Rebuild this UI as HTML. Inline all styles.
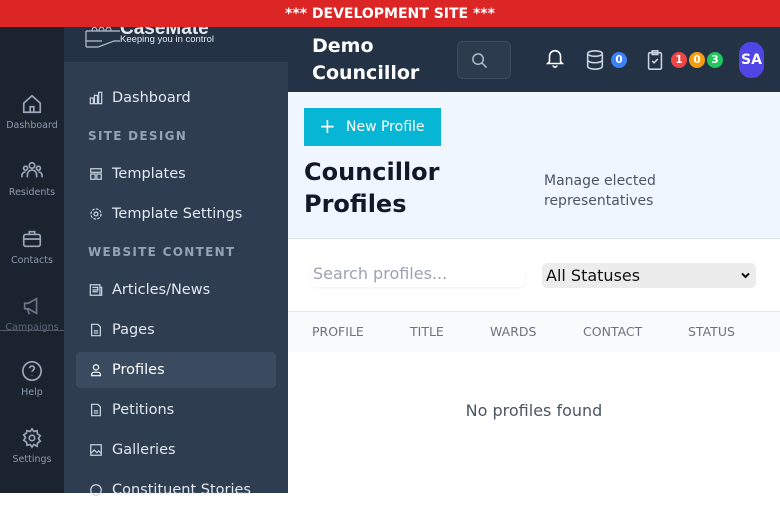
<!DOCTYPE html>
<html><head><meta charset="utf-8"><style>
*{box-sizing:border-box;margin:0;padding:0}
body{width:780px;height:493px;overflow:hidden;font-family:"DejaVu Sans","Liberation Sans",sans-serif;background:#fff;position:relative}
.banner{position:absolute;top:0;left:0;width:780px;height:27px;background:#dc2626;color:#fff;font-weight:bold;font-size:14px;text-align:center;line-height:28px;z-index:5}
.rail{position:absolute;top:27px;left:0;width:64px;height:466px;background:#1b232e}
.ri{position:absolute;left:0;width:64px;text-align:center;color:#8b9bb0;font-size:9.5px}
.ri svg{display:block;margin:0 auto 5px}
.side{position:absolute;top:27px;left:64px;width:224px;height:466px;background:#2e3d50}
.logo{position:absolute;top:0;left:0;width:224px;height:36px;background:#243246;border-bottom:1px solid #334155;overflow:hidden}
.nav{position:absolute;left:12px;width:200px;height:36px;color:#e2e8f0;font-size:14.5px;line-height:36px;padding-left:36px}
.nav svg{position:absolute;left:13px;top:11px}
.nav.act{background:#3a4b60;border-radius:4px;color:#fff}
.sec{position:absolute;left:24px;color:#94a3b8;font-size:12px;font-weight:bold;letter-spacing:1.3px}
.top{position:absolute;top:27px;left:288px;width:492px;height:65px;background:#243246}
.hero{position:absolute;top:92px;left:288px;width:492px;height:147px;background:#eff6ff;border-bottom:1px solid #dbe4ee}
.badge{position:absolute;width:16px;height:16px;border-radius:8px;color:#fff;font-size:10.5px;font-weight:bold;text-align:center;line-height:16px;top:52px}
</style></head><body>
<div class="banner">*** DEVELOPMENT SITE ***</div>
<div class="rail">
 <div class="ri" style="top:66px"><svg width="22" height="22" viewBox="0 0 24 24" fill="none" stroke="#9aa8ba" stroke-width="1.8"><path d="M3 11l9-8 9 8v10H3z"/><path d="M10 21v-6h4v6"/></svg>Dashboard</div>
 <div class="ri" style="top:133px"><svg width="22" height="22" viewBox="0 0 24 24" fill="none" stroke="#9aa8ba" stroke-width="1.8"><circle cx="12" cy="6" r="3"/><circle cx="5" cy="9" r="2.2"/><circle cx="19" cy="9" r="2.2"/><path d="M7 19v-3a5 5 0 0110 0v3M1 19v-2a4 4 0 014-4M23 19v-2a4 4 0 00-4-4"/></svg>Residents</div>
 <div class="ri" style="top:201px"><svg width="22" height="22" viewBox="0 0 24 24" fill="none" stroke="#9aa8ba" stroke-width="1.8"><rect x="3" y="7" width="18" height="13" rx="2"/><path d="M9 7V4h6v3M3 12h18"/></svg>Contacts</div>
 <div class="ri" style="top:268px;color:#5b6878"><svg width="22" height="22" viewBox="0 0 24 24" fill="none" stroke="#6b7889" stroke-width="1.8"><path d="M4 9h4l9-5v16l-9-5H4z"/><path d="M7 15l2 6"/></svg>Campaigns</div>
 <div style="position:absolute;top:303px;left:0;width:64px;height:1px;background:#556"></div>
 <div class="ri" style="top:333px"><svg width="22" height="22" viewBox="0 0 24 24" fill="none" stroke="#9aa8ba" stroke-width="1.8"><circle cx="12" cy="12" r="10"/><path d="M9.5 9a2.5 2.5 0 015 0c0 2-2.5 2-2.5 4M12 17v.5"/></svg>Help</div>
 <div class="ri" style="top:400px"><svg width="22" height="22" viewBox="0 0 24 24" fill="none" stroke="#9aa8ba" stroke-width="1.8"><circle cx="12" cy="12" r="3"/><path d="M12 2l2 3 3.5-1 .5 3.5 3 2-2 3 2 3-3 2-.5 3.5L14 19l-2 3-2-3-3.5 1L6 16.5l-3-2 2-3-2-3 3-2L6.5 4 10 5z"/></svg>Settings</div>
</div>
<div class="side">
 <div class="logo"><svg style="position:absolute;left:20px;top:-4px" width="38" height="26" viewBox="0 0 38 26" fill="none" stroke="#b8c2ce" stroke-width="1.2"><path d="M2 8h34M2 8v16M2 24h12l16-6h6M8 8c0-5 5-5 5 0M15 8c0-5 5-5 5 0M22 8c0-5 5-5 5 0M2 18h16"/></svg><div style="position:absolute;left:56px;top:-9px;color:#e5e7eb;font-size:19px;font-weight:bold;font-family:'Liberation Sans',sans-serif">CaseMate</div><div style="position:absolute;left:56px;top:7px;color:#e5e7eb;font-size:9.5px;font-family:'Liberation Sans',sans-serif">Keeping you in control</div></div>
 <div class="nav" style="top:53px"><svg width="14" height="14" viewBox="0 0 16 16" fill="none" stroke="#cbd5e1" stroke-width="1.4"><rect x="1.5" y="8" width="3.5" height="6.5"/><rect x="6.2" y="5" width="3.5" height="9.5"/><rect x="11" y="1.5" width="3.5" height="13"/></svg>Dashboard</div>
 <div class="sec" style="top:102px">SITE DESIGN</div>
 <div class="nav" style="top:129px"><svg width="14" height="14" viewBox="0 0 16 16" fill="none" stroke="#cbd5e1" stroke-width="1.4"><rect x="2" y="2" width="12" height="4"/><rect x="2" y="8" width="5" height="6"/><rect x="9" y="8" width="5" height="6"/></svg>Templates</div>
 <div class="nav" style="top:169px"><svg width="14" height="14" viewBox="0 0 16 16" fill="none" stroke="#cbd5e1" stroke-width="1.4"><circle cx="8" cy="8" r="2.2"/><circle cx="8" cy="8" r="5.8" stroke-dasharray="3 1.5"/></svg>Template Settings</div>
 <div class="sec" style="top:218px">WEBSITE CONTENT</div>
 <div class="nav" style="top:245px"><svg width="14" height="14" viewBox="0 0 16 16" fill="none" stroke="#cbd5e1" stroke-width="1.4"><rect x="1.5" y="2" width="11" height="12"/><path d="M12.5 5h2v9h-2M4 5h6v3H4M4 10h6"/></svg>Articles/News</div>
 <div class="nav" style="top:285px"><svg width="14" height="14" viewBox="0 0 16 16" fill="none" stroke="#cbd5e1" stroke-width="1.4"><path d="M3 1.5h7l3 3v10H3z M5.5 9h5M5.5 11.5h5"/></svg>Pages</div>
 <div class="nav act" style="top:325px"><svg width="14" height="14" viewBox="0 0 16 16" fill="none" stroke="#fff" stroke-width="1.4"><circle cx="8" cy="5" r="3"/><path d="M3 14.5v-1a3 3 0 013-3h4a3 3 0 013 3v1z"/></svg>Profiles</div>
 <div class="nav" style="top:365px"><svg width="14" height="14" viewBox="0 0 16 16" fill="none" stroke="#cbd5e1" stroke-width="1.4"><path d="M3 1.5h7l3 3v10H3z M5.5 9h5M5.5 11.5h5"/></svg>Petitions</div>
 <div class="nav" style="top:405px"><svg width="14" height="14" viewBox="0 0 16 16" fill="none" stroke="#cbd5e1" stroke-width="1.4"><rect x="2" y="2" width="12" height="12"/><path d="M2 12l4-4 3 3 2-2 3 3"/></svg>Galleries</div>
 <div class="nav" style="top:445px"><svg width="14" height="14" viewBox="0 0 16 16" fill="none" stroke="#cbd5e1" stroke-width="1.4"><circle cx="8" cy="8" r="6"/></svg>Constituent Stories</div>
</div>
<div class="top">
 <div style="position:absolute;left:24px;top:6px;color:#fff;font-weight:bold;font-size:19px;line-height:27px">Demo<br>Councillor</div>
 <div style="position:absolute;left:169px;top:14px;width:54px;height:38px;border:1px solid #3f4d60;border-radius:6px;background:#2d3b4e"><svg style="position:absolute;left:13px;top:10px" width="17" height="17" viewBox="0 0 18 18" fill="none" stroke="#b0bac6" stroke-width="1.6"><circle cx="7.5" cy="7.5" r="5.5"/><path d="M11.5 11.5l5 5"/></svg></div>
 <svg style="position:absolute;left:256px;top:20px" width="22" height="22" viewBox="0 0 24 24" fill="none" stroke="#fff" stroke-width="1.7"><path d="M6 16V10a6 6 0 0112 0v6l2 2H4z M10 20a2 2 0 004 0"/></svg>
 <svg style="position:absolute;left:296px;top:22px" width="22" height="22" viewBox="0 0 24 24" fill="none" stroke="#cbd5e1" stroke-width="1.7"><ellipse cx="12" cy="5" rx="8" ry="3"/><path d="M4 5v14c0 1.7 3.6 3 8 3s8-1.3 8-3V5M4 12c0 1.7 3.6 3 8 3s8-1.3 8-3"/></svg>
 <svg style="position:absolute;left:356px;top:22px" width="22" height="22" viewBox="0 0 24 24" fill="none" stroke="#cbd5e1" stroke-width="1.7"><rect x="5" y="4" width="14" height="18" rx="1.5"/><rect x="9" y="2" width="6" height="4"/><path d="M9 13l2 2 4-4"/></svg>
</div>
<div class="badge" style="left:611px;background:#3b82f6">0</div>
<div class="badge" style="left:671px;background:#ef4444">1</div>
<div class="badge" style="left:689px;background:#f59e0b">0</div>
<div class="badge" style="left:707px;background:#22c55e">3</div>
<div style="position:absolute;left:739px;top:42px;width:25px;height:36px;border-radius:12px;background:#4f46e5;color:#fff;font-weight:bold;font-size:14px;text-align:center;line-height:36px">SA</div>
<div class="hero">
 <div style="position:absolute;left:16px;top:16px;width:137px;height:38px;background:#06b6d4;color:#fff;font-size:14px;line-height:38px;padding-left:42px"><span style="position:absolute;left:15px;top:-1px;font-size:20px">+</span>New Profile</div>
 <div style="position:absolute;left:16px;top:64px;color:#111827;font-weight:bold;font-size:24px;line-height:32px">Councillor<br>Profiles</div>
 <div style="position:absolute;left:256px;top:79px;color:#4b5563;font-size:14px;line-height:20px">Manage elected<br>representatives</div>
</div>
<div style="position:absolute;left:311px;top:262px;width:214px;height:25px;border-radius:5px;box-shadow:0 1px 2px rgba(0,0,0,.06);color:#9ca3af;font-size:16px;line-height:24px;padding-left:2px">Search profiles...</div>
<div style="position:absolute;left:542px;top:263px;width:214px;height:25px;border-radius:5px;background:#ececec;color:#111;font-size:16px;line-height:25px;padding-left:4px">All Statuses<svg style="position:absolute;right:6px;top:9px" width="9" height="7" viewBox="0 0 9 7" fill="none" stroke="#111" stroke-width="2"><path d="M1 1.5l3.5 3.5 3.5-3.5"/></svg></div>
<div style="position:absolute;left:288px;top:311px;width:492px;height:41px;background:#f8fafc;border-top:1px solid #e5e7eb;color:#6b7280;font-size:12.5px;line-height:40px">
 <span style="position:absolute;left:24px">PROFILE</span><span style="position:absolute;left:122px">TITLE</span><span style="position:absolute;left:202px">WARDS</span><span style="position:absolute;left:295px">CONTACT</span><span style="position:absolute;left:400px">STATUS</span>
</div>
<div style="position:absolute;left:288px;top:401px;width:492px;text-align:center;color:#4b5563;font-size:16px">No profiles found</div>
</body></html>
